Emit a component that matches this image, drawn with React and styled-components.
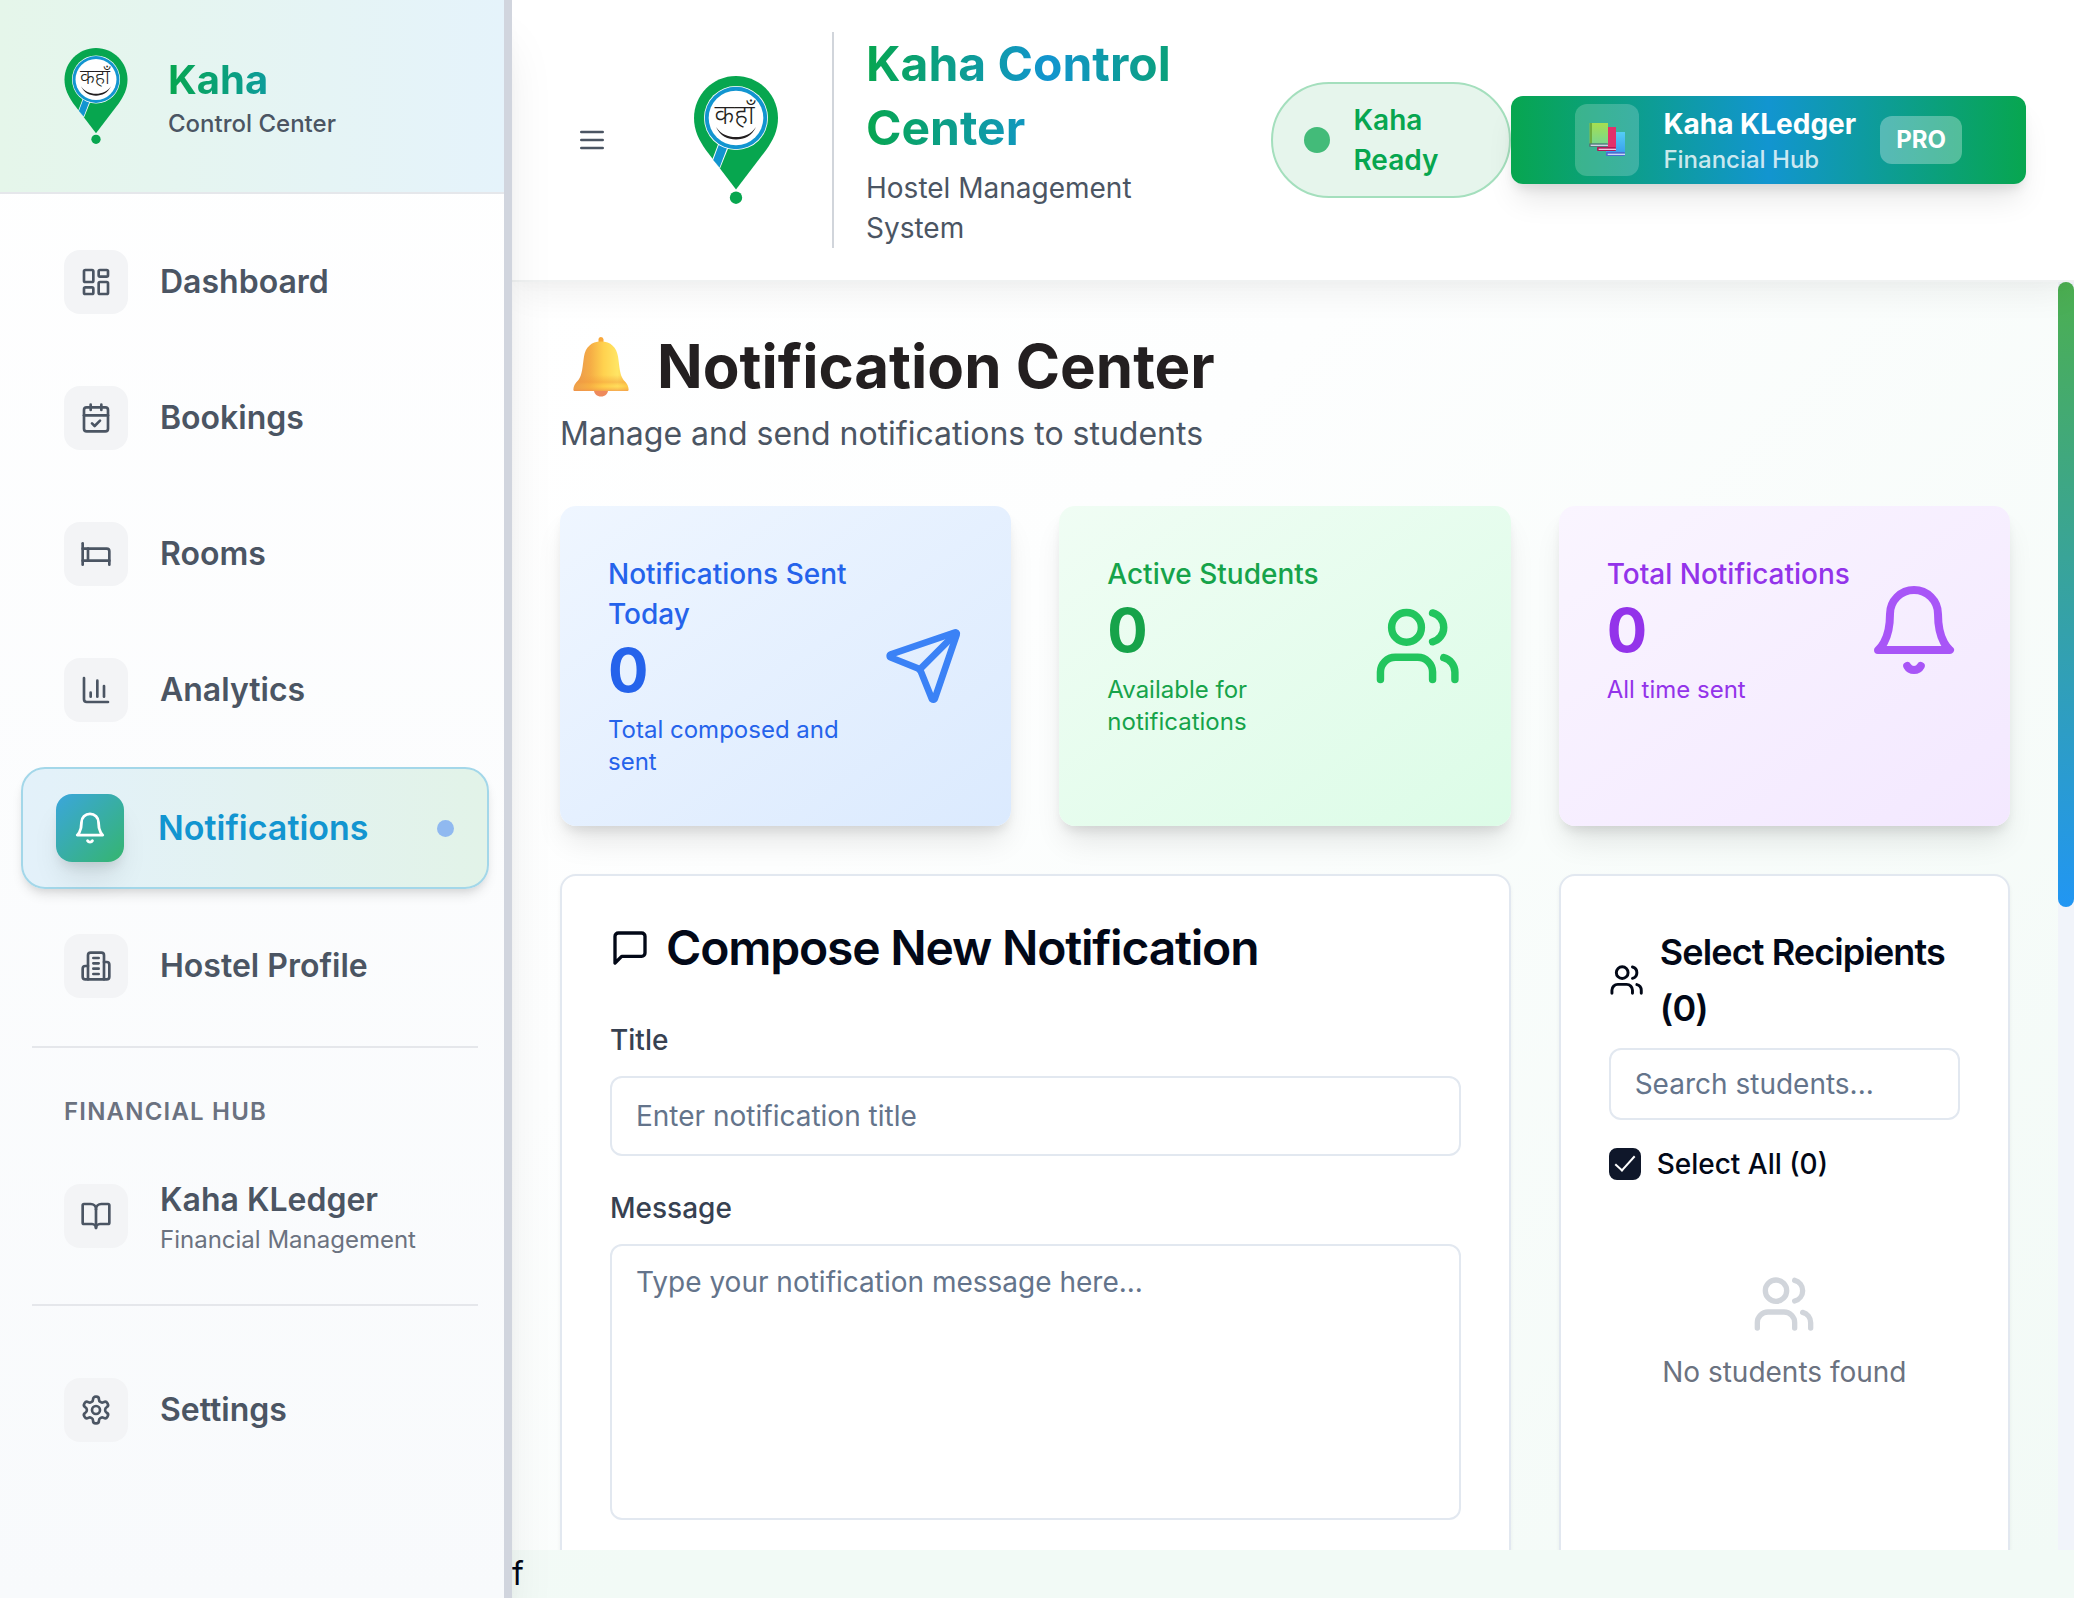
import React from "react";
import styled, { createGlobalStyle, css } from "styled-components";
import {
  LayoutDashboard,
  CalendarCheck,
  Bed,
  ChartColumn,
  BookOpen,
  Send,
  Users,
} from "lucide-react";

const GREEN = "#07a64f";
const BLUE = "#1295d0";

const GlobalStyle = createGlobalStyle`
  *, *::before, *::after { box-sizing: border-box; }
  body {
    margin: 0;
    font-family: Inter, "Noto Sans", sans-serif;
    font-size: 32px;
    line-height: 48px;
    color: #020817;
  }
  h1, h2, h3, p { margin: 0; }
  a { color: inherit; text-decoration: none; }
  button, input, textarea { font-family: inherit; }
`;

/* ---------- Icons ---------- */

function StrokeIcon({ size = 24, children, ...rest }) {
  return (
    <svg
      width={size}
      height={size}
      viewBox="0 0 24 24"
      fill="none"
      stroke="currentColor"
      strokeWidth="2"
      strokeLinecap="round"
      strokeLinejoin="round"
      aria-hidden="true"
      {...rest}
    >
      {children}
    </svg>
  );
}

const MenuIcon = (p) => (
  <StrokeIcon {...p}>
    <path d="M4 6h16M4 12h16M4 18h16" />
  </StrokeIcon>
);

const BellIcon = (p) => (
  <StrokeIcon {...p}>
    <path d="M6 8a6 6 0 0 1 12 0c0 7 3 9 3 9H3s3-2 3-9" />
    <path d="M10.3 21a1.94 1.94 0 0 0 3.4 0" />
  </StrokeIcon>
);

const BuildingIcon = (p) => (
  <StrokeIcon {...p}>
    <path d="M6 22V4a2 2 0 0 1 2-2h8a2 2 0 0 1 2 2v18Z" />
    <path d="M6 12H4a2 2 0 0 0-2 2v6a2 2 0 0 0 2 2h2" />
    <path d="M18 9h2a2 2 0 0 1 2 2v9a2 2 0 0 1-2 2h-2" />
    <path d="M10 6h4M10 10h4M10 14h4M10 18h4" />
  </StrokeIcon>
);

const SettingsIcon = (p) => (
  <StrokeIcon {...p}>
    <path d="M12.22 2h-.44a2 2 0 0 0-2 2v.18a2 2 0 0 1-1 1.73l-.43.25a2 2 0 0 1-2 0l-.15-.08a2 2 0 0 0-2.73.73l-.22.38a2 2 0 0 0 .73 2.73l.15.1a2 2 0 0 1 1 1.72v.51a2 2 0 0 1-1 1.74l-.15.09a2 2 0 0 0-.73 2.73l.22.38a2 2 0 0 0 2.73.73l.15-.08a2 2 0 0 1 2 0l.43.25a2 2 0 0 1 1 1.73V20a2 2 0 0 0 2 2h.44a2 2 0 0 0 2-2v-.18a2 2 0 0 1 1-1.73l.43-.25a2 2 0 0 1 2 0l.15.08a2 2 0 0 0 2.73-.73l.22-.39a2 2 0 0 0-.73-2.73l-.15-.08a2 2 0 0 1-1-1.74v-.5a2 2 0 0 1 1-1.74l.15-.09a2 2 0 0 0 .73-2.73l-.22-.38a2 2 0 0 0-2.73-.73l-.15.08a2 2 0 0 1-2 0l-.43-.25a2 2 0 0 1-1-1.73V4a2 2 0 0 0-2-2z" />
    <circle cx="12" cy="12" r="3" />
  </StrokeIcon>
);

const MessageIcon = (p) => (
  <StrokeIcon {...p}>
    <path d="M21 15a2 2 0 0 1-2 2H7l-4 4V5a2 2 0 0 1 2-2h14a2 2 0 0 1 2 2z" />
  </StrokeIcon>
);

function KahaLogo({ width, height }) {
  return (
    <svg width={width} height={height} viewBox="0 0 84 128" role="img" aria-label="Kaha">
      <path
        d="M42 0C18.8 0 0 18.8 0 42c0 12.500 5 22 11.500 31.500L42 113.500l30.500-40C79 64 84 54.500 84 42 84 18.800 65.200 0 42 0Z"
        fill={GREEN}
      />
      <circle cx="42" cy="121.700" r="6.200" fill={GREEN} />
      <path d="M24.300 67.500 34.500 71.500 26 92.500 18.400 83.200Z" fill="#fff" />
      <path d="M25.300 67.500 33.600 70.500 25.600 91.400 19.200 84Z" fill={BLUE} />
      <circle cx="42" cy="42" r="32" fill="#fff" />
      <circle cx="42" cy="42" r="31.200" fill={BLUE} />
      <circle cx="42" cy="42" r="27.300" fill="#fff" />
      <text
        x="40.500"
        y="48"
        textAnchor="middle"
        fontFamily='"Noto Sans Devanagari", "Noto Sans", sans-serif'
        fontWeight="300"
        fontSize="27"
        fill="#231f20"
      >
        कहाँ
      </text>
      <path d="M22 51C27 58.500 34 61 42 61S57 58.500 62 51C58 60 50 63.500 42 63.500S26 60 22 51Z" fill="#231f20" />
    </svg>
  );
}

function BellPicture() {
  return (
    <svg width="81" height="62" viewBox="0 1 81 62" role="img" aria-label="Bell">
      <defs>
        <linearGradient id="bellBody" x1="0" y1="0" x2="1" y2="0">
          <stop offset="0" stopColor="#e8964f" />
          <stop offset="0.300" stopColor="#f5ac45" />
          <stop offset="0.550" stopColor="#ffd24f" />
          <stop offset="0.800" stopColor="#ffe564" />
          <stop offset="1" stopColor="#fdc94a" />
        </linearGradient>
        <linearGradient id="bellRim" x1="0" y1="0" x2="0" y2="1">
          <stop offset="0" stopColor="#f39a3c" stopOpacity="0" />
          <stop offset="0.450" stopColor="#f39a3c" stopOpacity="0.500" />
          <stop offset="0.700" stopColor="#ffc13d" stopOpacity="0.200" />
          <stop offset="1" stopColor="#f08f4a" stopOpacity="0.700" />
        </linearGradient>
      </defs>
      <path d="M38.500 9V5.500a2.500 2.500 0 0 1 5 0V9Z" fill="#f9a83a" />
      <path d="M34 56h14c0 4-3 6.500-7 6.500S34 60 34 56Z" fill="#ee8a5c" />
      <path
        d="M41 7.500c-10 0-15.500 6-17 15-1.400 9.500-1.800 19-5.500 23.500-3.500 3.500-5 6-5 9.500 0 1.200.6 1.500 1.500 1.500h52c.9 0 1.500-.3 1.500-1.500 0-3.500-1.500-6-5-9.500-3.700-4.500-4.100-14-5.500-23.500-1.500-9-7-15-17-15Z"
        fill="url(#bellBody)"
      />
      <path
        d="M20.500 41h41c.6 2 1.200 3.700 2 5 3.500 3.500 5 6 5 9.500 0 1.200-.6 1.500-1.500 1.500H15c-.9 0-1.500-.3-1.500-1.500 0-3.500 1.500-6 5-9.500.8-1.300 1.500-3 2-5Z"
        fill="url(#bellRim)"
      />
    </svg>
  );
}

function BooksPicture() {
  return (
    <svg width="36" height="34" viewBox="0 0 108 102" role="img" aria-label="Books">
      <defs>
        <linearGradient id="bookGreen" x1="0" y1="0" x2="0" y2="1">
          <stop offset="0" stopColor="#a6df50" />
          <stop offset="1" stopColor="#77d68f" />
        </linearGradient>
        <linearGradient id="bookBlue" x1="0" y1="0" x2="0" y2="1">
          <stop offset="0" stopColor="#54cdf5" />
          <stop offset="1" stopColor="#3aa0ee" />
        </linearGradient>
      </defs>
      <rect x="51" y="27" width="57" height="62" fill="url(#bookBlue)" />
      <rect x="51" y="87" width="57" height="12" rx="3" fill="#4b6fd0" />
      <rect x="56" y="92" width="52" height="4" fill="#cdd8f6" />
      <rect x="24" y="12" width="57" height="62" fill="#e2306a" />
      <rect x="24" y="72" width="57" height="12" rx="3" fill="#b01a58" />
      <rect x="29" y="77" width="52" height="4" fill="#f0c9e2" />
      <rect x="2" y="0" width="55" height="64" fill="url(#bookGreen)" />
      <rect x="2" y="0" width="7" height="64" fill="#6fae3f" />
      <rect x="0" y="61" width="57" height="11" rx="3" fill="#4f7f78" />
      <rect x="5" y="65" width="52" height="4" fill="#d5cfe8" />
    </svg>
  );
}

/* ---------- Page frame ---------- */

const Page = styled.div`
  display: flex;
  height: 100vh;
  overflow: hidden;
  background: linear-gradient(135deg, #f9fafb 0%, #f2faf6 60%, #f2faf6 100%);
`;

const Column = styled.div`
  flex: 1;
  min-width: 0;
  display: flex;
  flex-direction: column;
`;

/* ---------- Sidebar ---------- */

const Sidebar = styled.aside`
  flex: none;
  width: 512px;
  z-index: 2;
  position: relative;
  border-right: 8px solid #d1d5de;
  background: linear-gradient(180deg, #ffffff, #f8fafc);
  box-shadow: 0 40px 50px -10px rgba(0, 0, 0, 0.1), 0 16px 20px -12px rgba(0, 0, 0, 0.1);
`;

const SidebarHead = styled.div`
  display: flex;
  align-items: center;
  gap: 40px;
  padding: 48px 64px;
  border-bottom: 2px solid #e5e7eb;
  background: linear-gradient(to right, #e5f6ea, #e5f3fb);
`;

const SidebarName = styled.div`
  font-size: 40px;
  line-height: 56px;
  font-weight: 700;
  color: transparent;
  background: linear-gradient(to right, ${GREEN}, ${BLUE});
  background-clip: text;
`;

const SidebarTagline = styled.div`
  font-size: 24px;
  line-height: 32px;
  font-weight: 500;
  color: #4b5563;
`;

const Nav = styled.nav`
  display: flex;
  flex-direction: column;
  gap: 24px;
  padding: 32px 26px 32px 32px;
`;

const IconTile = styled.span`
  flex: none;
  display: grid;
  place-items: center;
  width: 64px;
  height: 64px;
  border-radius: 16px;
  background: #f3f4f6;
`;

const NavLink = styled.a`
  display: flex;
  align-items: center;
  gap: 32px;
  padding: 24px 32px;
  font-size: 32px;
  line-height: 48px;
  font-weight: 600;
  color: #4b5563;

  ${(p) =>
    p.$active &&
    css`
      gap: 34px;
      margin: -3px -11px;
      padding: 25px 33px;
      font-size: 34px;
      color: ${BLUE};
      border: 2px solid #a3d7e9;
      border-radius: 24px;
      background: linear-gradient(to right, #e3f1fa, #e2f3e8);
      box-shadow: 0 8px 12px -2px rgba(0, 0, 0, 0.1), 0 4px 8px -4px rgba(0, 0, 0, 0.1);

      ${IconTile} {
        width: 68px;
        height: 68px;
        color: #fff;
        background: linear-gradient(135deg, #3ba6dc, #35b56f);
        box-shadow: 0 20px 30px -6px rgba(0, 0, 0, 0.1), 0 8px 12px -4px rgba(0, 0, 0, 0.1);
      }
    `}
`;

const NavText = styled.span`
  flex: 1;
`;

const NavNote = styled.span`
  display: block;
  font-size: 24px;
  line-height: 32px;
  font-weight: 400;
  color: #6b7280;
`;

const ActiveDot = styled.span`
  width: 17px;
  height: 17px;
  border-radius: 50%;
  background: #90b9f0;
`;

const NavSection = styled.div`
  display: flex;
  flex-direction: column;
  gap: 24px;
  padding-top: 48px;
  border-top: 2px solid #e5e7eb;
`;

const NavHeading = styled.h3`
  padding: 0 32px;
  font-size: 24px;
  line-height: 32px;
  font-weight: 600;
  letter-spacing: 0.05em;
  text-transform: uppercase;
  color: #6b7280;
`;

/* ---------- Header ---------- */

const Header = styled.header`
  display: flex;
  align-items: center;
  padding: 32px 48px;
  background: #fff;
  border-bottom: 2px solid #f0f2f2;
  box-shadow: 0 20px 30px -6px rgba(0, 0, 0, 0.05), 0 8px 12px -4px rgba(0, 0, 0, 0.02);
  position: relative;
  z-index: 1;
`;

const MenuButton = styled.button`
  flex: none;
  display: grid;
  place-items: center;
  width: 64px;
  height: 64px;
  padding: 0;
  border: 0;
  border-radius: 12px;
  background: transparent;
  color: #4b5563;
`;

const HeaderLogo = styled.div`
  flex: none;
  display: grid;
  place-items: center;
  width: 128px;
  margin: 0 32px 0 48px;
`;

const HeaderBrand = styled.div`
  flex: 1;
  min-width: 0;
  margin-right: 40px;
  padding-left: 32px;
  border-left: 2px solid #d1d5db;
`;

const BrandTitle = styled.h1`
  margin-bottom: 8px;
  font-size: 48px;
  line-height: 64px;
  font-weight: 700;
  color: transparent;
  background: linear-gradient(to right, ${GREEN}, ${BLUE}, ${GREEN});
  background-clip: text;
`;

const BrandSub = styled.p`
  font-size: 28px;
  line-height: 40px;
  color: #4b5563;
`;

const StatusPill = styled.div`
  flex: 0 0 240px;
  display: flex;
  align-items: center;
  gap: 24px;
  padding: 16px 32px;
  border: 2px solid #a4dfbd;
  border-radius: 60px;
  background: #e6f5ec;
  font-size: 28px;
  line-height: 40px;
  font-weight: 600;
  color: ${GREEN};
`;

const StatusDot = styled.span`
  flex: none;
  width: 24px;
  height: 24px;
  border-radius: 50%;
  background: #43bb79;
  box-shadow: 0 0 0 1px #43bb79;
`;

const LedgerButton = styled.button`
  flex: none;
  display: flex;
  align-items: center;
  gap: 24px;
  padding: 8px 64px;
  border: 0;
  border-radius: 12px;
  color: #fff;
  text-align: left;
  background: linear-gradient(to right, ${GREEN}, ${BLUE}, ${GREEN});
  box-shadow: 0 20px 30px -6px rgba(0, 0, 0, 0.1), 0 8px 12px -4px rgba(0, 0, 0, 0.1);
`;

const LedgerTile = styled.span`
  display: grid;
  place-items: center;
  width: 64px;
  height: 72px;
  border-radius: 12px;
  background: rgba(255, 255, 255, 0.2);
`;

const LedgerName = styled.span`
  display: block;
  font-size: 28px;
  line-height: 40px;
  font-weight: 700;
`;

const LedgerNote = styled.span`
  display: block;
  font-size: 24px;
  line-height: 32px;
  font-weight: 500;
  color: rgba(255, 255, 255, 0.8);
`;

const ProBadge = styled.span`
  padding: 8px 16px;
  border-radius: 12px;
  font-size: 24px;
  line-height: 32px;
  font-weight: 700;
  background: rgba(255, 255, 255, 0.3);
`;

/* ---------- Content ---------- */

const ScrollRow = styled.div`
  flex: 1;
  min-height: 0;
  display: flex;
  overflow: hidden;
`;

const Main = styled.main`
  flex: 1;
  min-width: 0;
  padding: 48px;
  background: linear-gradient(135deg, #ffffff 0%, #fdfefe 30%, #f2faf6 100%);
`;

const ScrollTrack = styled.div`
  flex: none;
  width: 16px;
  background: #f1f4fa;
`;

const ScrollThumb = styled.div`
  height: 625px;
  border-radius: 8px;
  background: linear-gradient(#4caf50, #2196f3);
`;

const PageTitle = styled.h2`
  display: flex;
  align-items: center;
  gap: 16px;
  margin-bottom: 8px;
  font-size: 60px;
  line-height: 72px;
  font-weight: 700;
  color: #231f20;
`;

const PageSub = styled.p`
  margin-bottom: 48px;
  color: #4b5563;
`;

const CardGrid = styled.div`
  display: grid;
  grid-template-columns: repeat(3, minmax(0, 1fr));
  gap: 48px;
`;

const tones = {
  blue: { from: "#eff6ff", to: "#dbeafe", text: "#2563eb", icon: "#3b82f6" },
  green: { from: "#f0fdf4", to: "#dcfce7", text: "#16a34a", icon: "#22c55e" },
  purple: { from: "#faf5ff", to: "#f3e8ff", text: "#9333ea", icon: "#a855f7" },
};

const StatCard = styled.section`
  padding: 48px;
  border-radius: 16px;
  color: ${(p) => tones[p.$tone].text};
  background: linear-gradient(
    to bottom right,
    ${(p) => tones[p.$tone].from},
    ${(p) => tones[p.$tone].to}
  );
  box-shadow: 0 20px 30px -6px rgba(0, 0, 0, 0.1), 0 8px 12px -4px rgba(0, 0, 0, 0.1);
`;

const StatBody = styled.div`
  display: flex;
  align-items: center;
  justify-content: space-between;

  svg {
    color: ${(p) => tones[p.$tone].icon};
  }
`;

const StatLabel = styled.p`
  font-size: 28px;
  line-height: 40px;
  font-weight: 500;
`;

const StatValue = styled.p`
  margin-bottom: 8px;
  font-size: 60px;
  line-height: 72px;
  font-weight: 700;
`;

const StatNote = styled.p`
  font-size: 24px;
  line-height: 32px;
`;

const Panel = styled.section`
  grid-column: span ${(p) => p.$span};
  padding: 48px;
  border: 2px solid #e2e8f0;
  border-radius: 16px;
  background: #fff;
  box-shadow: 0 2px 4px rgba(0, 0, 0, 0.05);
`;

const PanelTitle = styled.h3`
  display: flex;
  align-items: center;
  gap: 16px;
  margin-bottom: ${(p) => (p.$small ? 12 : 48)}px;
  font-size: ${(p) => (p.$small ? 36 : 48)}px;
  line-height: ${(p) => (p.$small ? 56 : 48)}px;
  font-weight: 600;
  letter-spacing: -0.025em;
`;

const Field = styled.div`
  display: flex;
  flex-direction: column;
  gap: 16px;

  & + & {
    margin-top: 32px;
  }
`;

const FieldLabel = styled.label`
  font-size: 28px;
  line-height: 40px;
  font-weight: 500;
  color: #374151;
`;

const control = css`
  display: block;
  width: 100%;
  border: 2px solid #e2e8f0;
  border-radius: 12px;
  background: #fff;
  font-size: 28px;
  line-height: 40px;
  color: #020817;

  &::placeholder {
    color: #64748b;
    opacity: 1;
  }
`;

const TextInput = styled.input`
  ${control}
  height: ${(p) => (p.$compact ? 72 : 80)}px;
  padding: 0 24px;
`;

const TextArea = styled.textarea`
  ${control}
  height: 276px;
  padding: 16px 24px;
  resize: none;
`;

const SelectAll = styled.label`
  display: flex;
  align-items: center;
  gap: 16px;
  margin-top: 24px;
  font-size: 28px;
  line-height: 40px;
  font-weight: 500;
`;

const Checkbox = styled.input`
  appearance: none;
  display: grid;
  place-items: center;
  width: 32px;
  height: 32px;
  margin: 0;
  border: 2px solid #0f172a;
  border-radius: 8px;

  &:checked {
    background: #0f172a;
  }

  &:checked::after {
    content: "";
    width: 10px;
    height: 20px;
    margin-bottom: 6px;
    border: solid #fff;
    border-width: 0 2px 2px 0;
    transform: rotate(42deg);
  }
`;

const EmptyState = styled.div`
  display: flex;
  flex-direction: column;
  align-items: center;
  gap: 16px;
  padding-top: 88px;
  font-size: 28px;
  line-height: 40px;
  color: #6b7280;

  svg {
    color: #d1d5db;
  }
`;

const Footer = styled.footer`
  flex: none;
  height: 48px;
`;

/* ---------- Data ---------- */

const navItems = [
  { label: "Dashboard", icon: LayoutDashboard },
  { label: "Bookings", icon: CalendarCheck },
  { label: "Rooms", icon: Bed },
  { label: "Analytics", icon: ChartColumn },
  { label: "Notifications", icon: BellIcon, active: true },
  { label: "Hostel Profile", icon: BuildingIcon },
];

const stats = [
  { tone: "blue", label: "Notifications Sent Today", note: "Total composed and sent", icon: Send },
  { tone: "green", label: "Active Students", note: "Available for notifications", icon: Users },
  { tone: "purple", label: "Total Notifications", note: "All time sent", icon: BellIcon },
];

function NavItem({ label, note, icon: Icon, active }) {
  return (
    <NavLink href="#" $active={active} aria-current={active ? "page" : undefined}>
      <IconTile>
        <Icon size={active ? 34 : 32} />
      </IconTile>
      <NavText>
        {label}
        {note && <NavNote>{note}</NavNote>}
      </NavText>
      {active && <ActiveDot />}
    </NavLink>
  );
}

function Stat({ tone, label, note, icon: Icon }) {
  return (
    <StatCard $tone={tone}>
      <StatBody $tone={tone}>
        <div>
          <StatLabel>{label}</StatLabel>
          <StatValue>0</StatValue>
          <StatNote>{note}</StatNote>
        </div>
        <Icon size={96} />
      </StatBody>
    </StatCard>
  );
}

export default function App() {
  return (
    <Page>
      <GlobalStyle />
      <Sidebar>
        <SidebarHead>
          <KahaLogo width={64} height={96} />
          <div>
            <SidebarName>Kaha</SidebarName>
            <SidebarTagline>Control Center</SidebarTagline>
          </div>
        </SidebarHead>
        <Nav>
          {navItems.map((item) => (
            <NavItem key={item.label} {...item} />
          ))}
          <NavSection>
            <NavHeading>Financial Hub</NavHeading>
            <NavItem label="Kaha KLedger" note="Financial Management" icon={BookOpen} />
          </NavSection>
          <NavSection>
            <NavItem label="Settings" icon={SettingsIcon} />
          </NavSection>
        </Nav>
      </Sidebar>

      <Column>
        <Header>
          <MenuButton type="button" aria-label="Toggle menu">
            <MenuIcon size={32} />
          </MenuButton>
          <HeaderLogo>
            <KahaLogo width={84} height={128} />
          </HeaderLogo>
          <HeaderBrand>
            <BrandTitle>Kaha Control Center</BrandTitle>
            <BrandSub>Hostel Management System</BrandSub>
          </HeaderBrand>
          <StatusPill>
            <StatusDot />
            <span>Kaha Ready</span>
          </StatusPill>
          <LedgerButton type="button">
            <LedgerTile>
              <BooksPicture />
            </LedgerTile>
            <span>
              <LedgerName>Kaha KLedger</LedgerName>
              <LedgerNote>Financial Hub</LedgerNote>
            </span>
            <ProBadge>PRO</ProBadge>
          </LedgerButton>
        </Header>

        <ScrollRow>
          <Main>
            <PageTitle>
              <BellPicture />
              Notification Center
            </PageTitle>
            <PageSub>Manage and send notifications to students</PageSub>
            <CardGrid>
              {stats.map((s) => (
                <Stat key={s.label} {...s} />
              ))}

              <Panel $span={2}>
                <PanelTitle>
                  <MessageIcon size={40} />
                  Compose New Notification
                </PanelTitle>
                <Field>
                  <FieldLabel htmlFor="title">Title</FieldLabel>
                  <TextInput id="title" type="text" placeholder="Enter notification title" />
                </Field>
                <Field>
                  <FieldLabel htmlFor="message">Message</FieldLabel>
                  <TextArea id="message" placeholder="Type your notification message here..." />
                </Field>
              </Panel>

              <Panel $span={1}>
                <PanelTitle $small>
                  <Users size={40} />
                  Select Recipients (0)
                </PanelTitle>
                <TextInput
                  $compact
                  type="text"
                  aria-label="Search students"
                  placeholder="Search students..."
                />
                <SelectAll>
                  <Checkbox type="checkbox" defaultChecked />
                  Select All (0)
                </SelectAll>
                <EmptyState>
                  <Users size={64} />
                  No students found
                </EmptyState>
              </Panel>
            </CardGrid>
          </Main>
          <ScrollTrack>
            <ScrollThumb />
          </ScrollTrack>
        </ScrollRow>
        <Footer>f</Footer>
      </Column>
    </Page>
  );
}
